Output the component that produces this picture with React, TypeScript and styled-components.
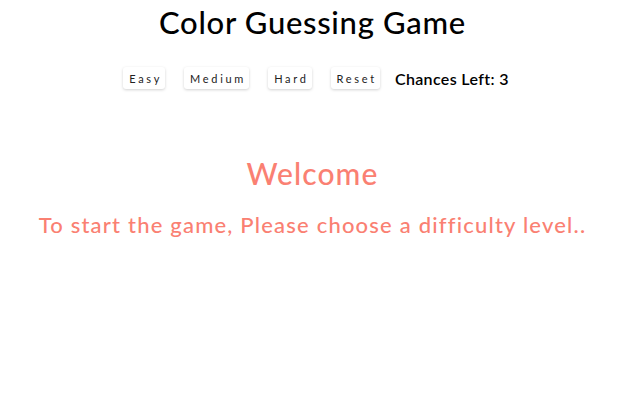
import React from "react";
import styled, { createGlobalStyle } from "styled-components";

const Global = createGlobalStyle`
  html, body { margin: 0; padding: 0; background: #ffffff; }
  body { font-family: "Lato", "Noto Sans", sans-serif; color: #000; }
`;

const Page = styled.div`
  width: 625px;
  display: flex;
  flex-direction: column;
  align-items: center;
`;

const Title = styled.h1`
  margin: 4px 0 0;
  font-size: 31px;
  font-weight: 500;
  letter-spacing: 0.7px;
  line-height: 36px;
`;

const Toolbar = styled.div`
  display: flex;
  align-items: center;
  gap: 19px;
  margin-top: 27px;
  padding-left: 7px;
`;

const Button = styled.button`
  font-family: "Lato", "Noto Sans", sans-serif;
  font-size: 11px;
  letter-spacing: 2.7px;
  color: #222;
  background: #fff;
  border: none;
  border-radius: 3px;
  box-shadow: 0 1px 3px rgba(0, 0, 0, 0.18);
  height: 22px;
  padding: 0 3px 0 6px;
`;

const Chances = styled.span`
  font-size: 16px;
  font-weight: 600;
  letter-spacing: 0.35px;
  margin-left: -4px;
`;

const Message = styled.section`
  display: flex;
  flex-direction: column;
  align-items: center;
  color: #fa8072;
  margin-top: 66px;
`;

const Heading = styled.h2`
  margin: 0;
  font-size: 30px;
  font-weight: 500;
  letter-spacing: 1.1px;
  line-height: 36px;
`;

const Sub = styled.p`
  margin: 20px 0 0;
  font-size: 22px;
  line-height: 28px;
  font-weight: 500;
  letter-spacing: 1.2px;
`;

export default function App() {
  return (
    <>
      <Global />
      <Page>
        <Title>Color Guessing Game</Title>
        <Toolbar>
          <Button>Easy</Button>
          <Button>Medium</Button>
          <Button>Hard</Button>
          <Button>Reset</Button>
          <Chances>Chances Left: 3</Chances>
        </Toolbar>
        <Message>
          <Heading>Welcome</Heading>
          <Sub>To start the game, Please choose a difficulty level..</Sub>
        </Message>
      </Page>
    </>
  );
}
